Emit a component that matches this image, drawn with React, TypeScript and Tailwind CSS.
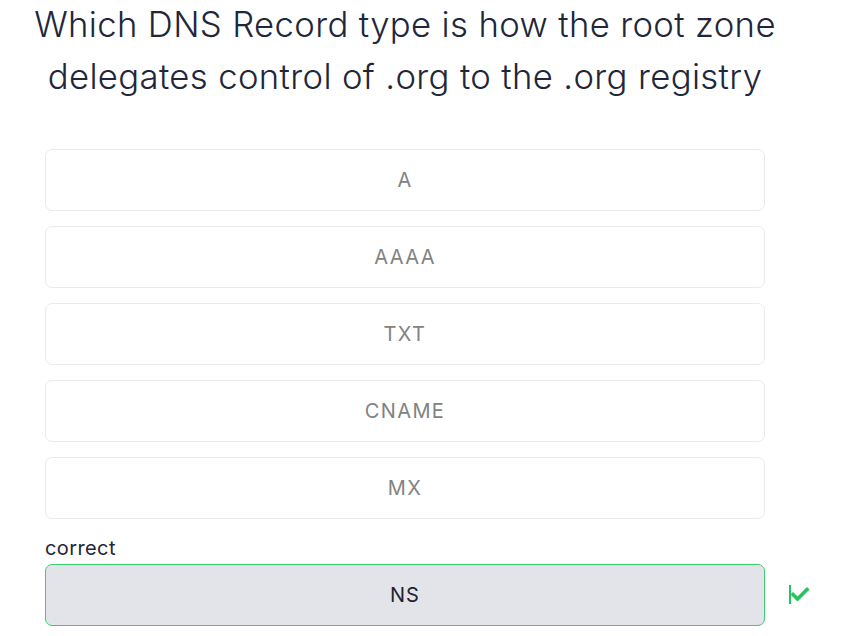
const options = ['A', 'AAAA', 'TXT', 'CNAME', 'MX'];

function CheckMark() {
  return (
    <svg width="22" height="20" viewBox="0 0 22 20" className="shrink-0">
      <rect x="1" y="0" width="2" height="19" fill="#22c55e" />
      <path d="M5 9.5 L9.5 14 L19 4.5" fill="none" stroke="#22c55e" strokeWidth="3.6" strokeLinecap="square" />
    </svg>
  );
}

export default function App() {
  return (
    <div className="min-h-screen bg-white" style={{ fontFamily: 'Inter, "Noto Sans", sans-serif' }}>
      <div className="ml-[45px] w-[720px]">
        <h1 className="-mx-[30px] -mt-[2px] text-center text-[34.7px] font-light leading-[52px] tracking-[0.01em] text-[#22263a]">
          Which DNS Record type is how the root zone delegates control of .org to the .org registry
        </h1>

        <div className="mt-[47px] flex flex-col gap-[15px]">
          {options.map((o) => (
            <div
              key={o}
              className="flex h-[62px] items-center justify-center rounded-[7px] border border-[#ebebeb] bg-white text-[20px] tracking-[0.07em] text-[#828282]"
            >
              {o}
            </div>
          ))}
        </div>

        <div className="mt-[16px] text-[20px] leading-[26px] tracking-[0.02em] text-[#22263a]">correct</div>
        <div className="relative mt-[3px]">
          <div className="flex h-[62px] items-center justify-center rounded-[7px] border border-[#3ccf6e] bg-[#e2e4e9] text-[20px] tracking-[0.05em] text-[#1f2230]">
            NS
          </div>
          <div className="absolute left-[743px] top-[21px]">
            <CheckMark />
          </div>
        </div>
      </div>
    </div>
  );
}
